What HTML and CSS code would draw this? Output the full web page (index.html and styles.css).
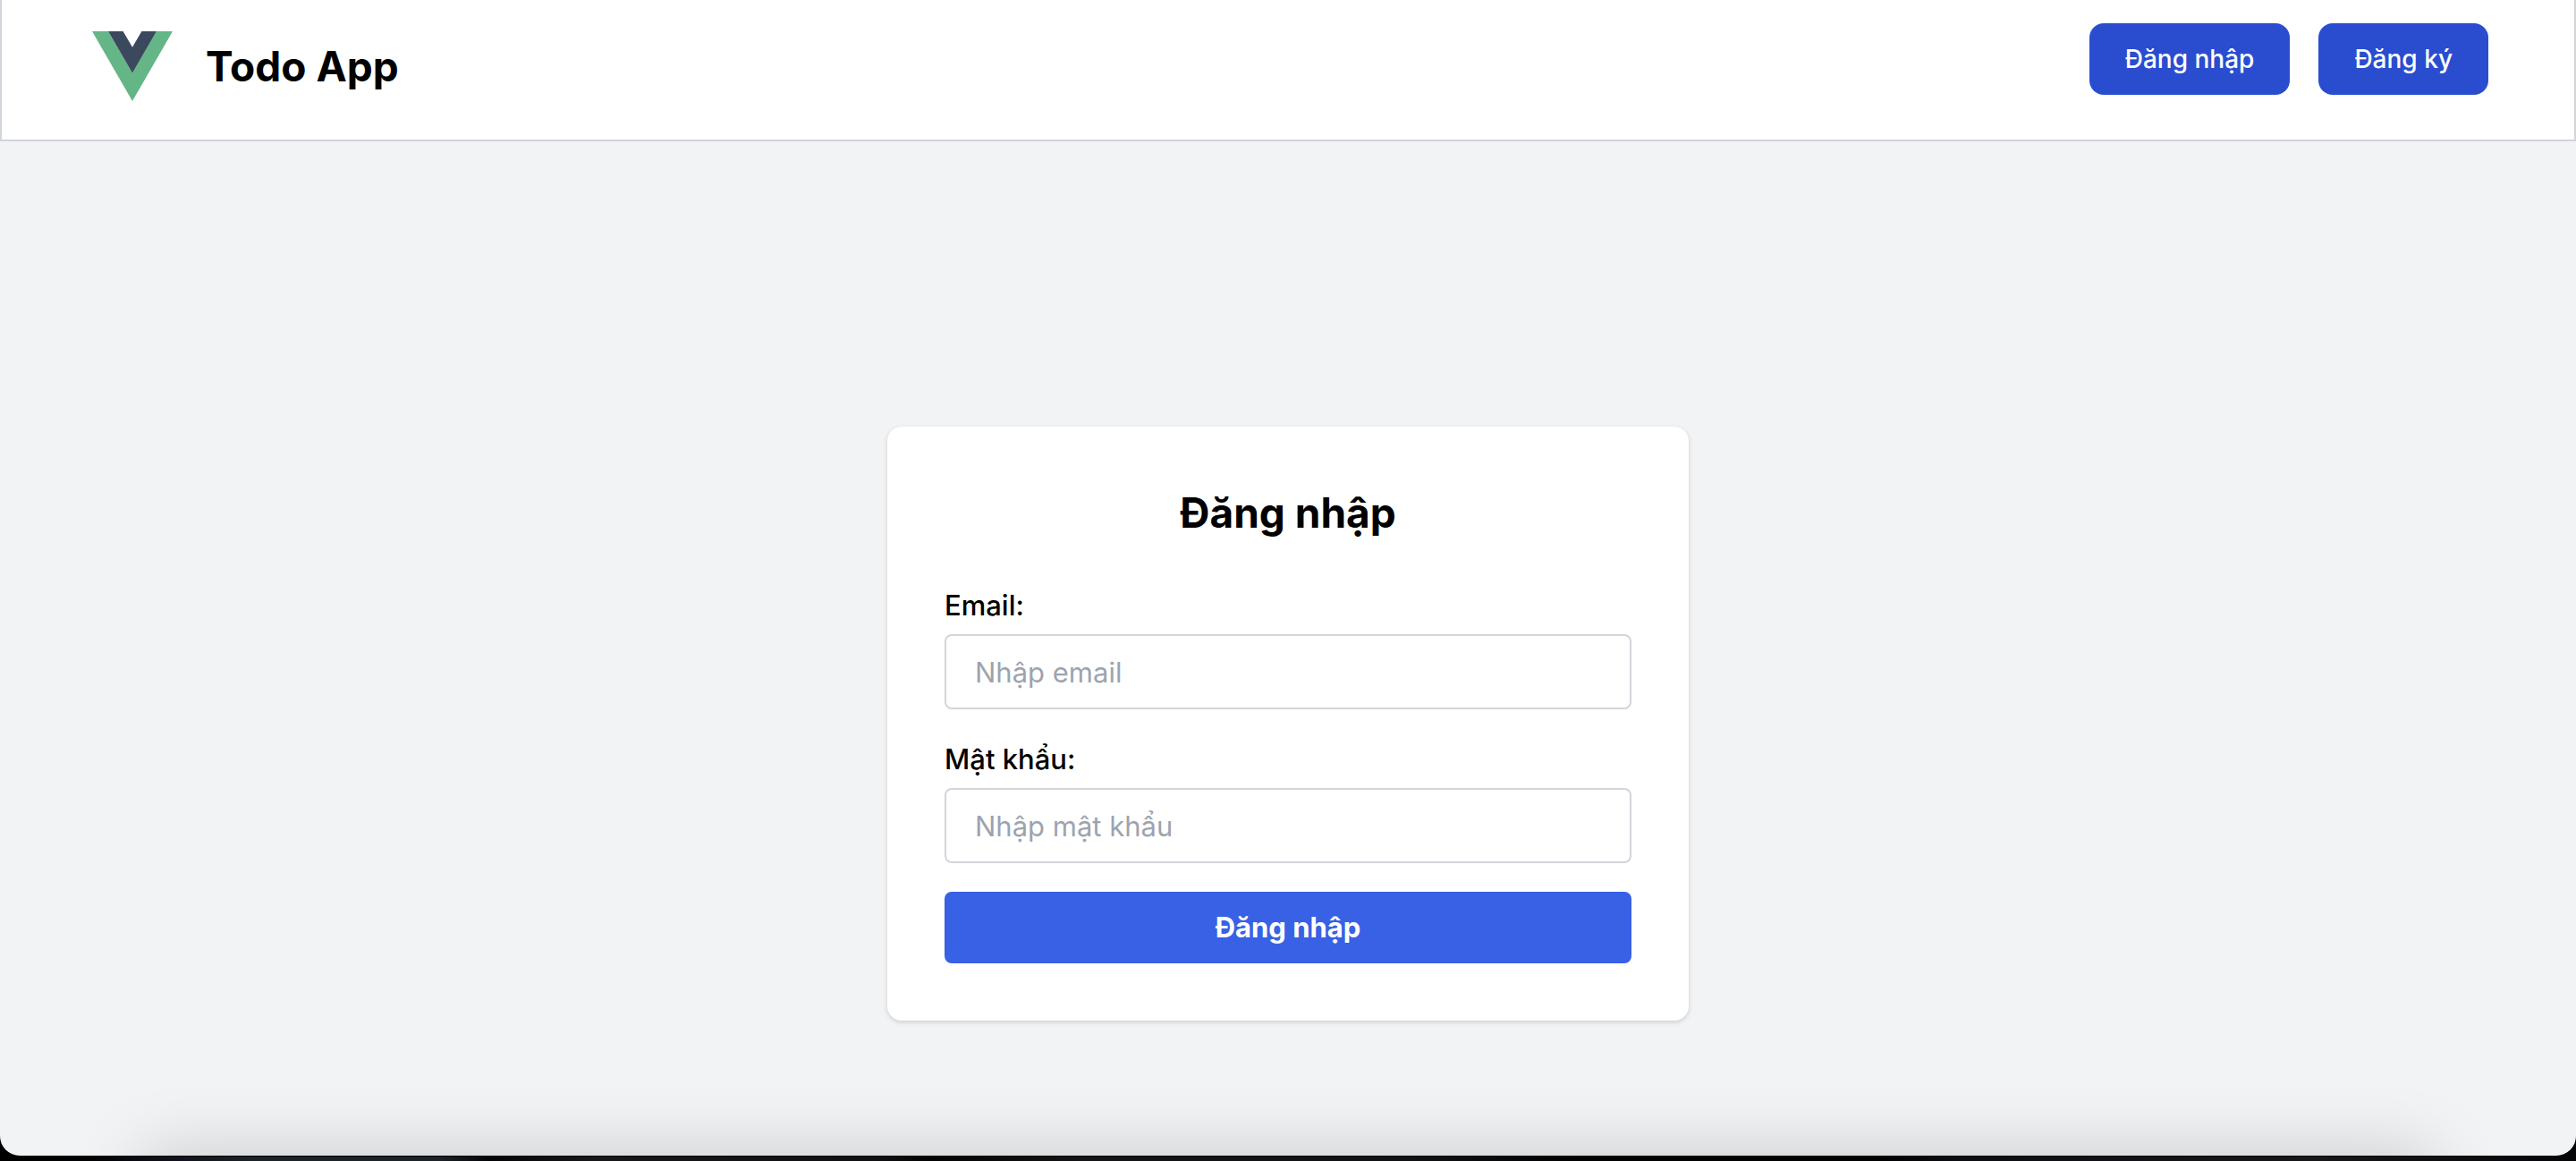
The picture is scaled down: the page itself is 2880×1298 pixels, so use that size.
FILE: index.html
```html
<!DOCTYPE html>
<html lang="vi">
<head>
  <meta charset="utf-8">
  <meta name="viewport" content="width=device-width, initial-scale=1">
  <title>Todo App</title>
  <link rel="stylesheet" href="styles.css">
</head>
<body>
  <div class="window">
    <header class="header">
      <div class="brand">
        <svg class="brand-logo" viewBox="0 0 100 78" aria-hidden="true">
          <path fill="#64b687" d="M5 0H23L50 46.700L77 0H95L50 78Z"/>
          <path fill="#3b495e" d="M23 0H39.600L50 17.800L60.400 0H77L50 46.700Z"/>
        </svg>
        <h1 class="brand-title">Todo App</h1>
      </div>
      <nav class="nav">
        <button class="nav-button" type="button">Đăng nhập</button>
        <button class="nav-button" type="button">Đăng ký</button>
      </nav>
    </header>
    <main class="main">
      <form class="card">
        <h2 class="card-title">Đăng nhập</h2>
        <div class="field">
          <label class="label" for="email">Email:</label>
          <input class="input" id="email" type="email" placeholder="Nhập email">
        </div>
        <div class="field">
          <label class="label" for="password">Mật khẩu:</label>
          <input class="input" id="password" type="password" placeholder="Nhập mật khẩu">
        </div>
        <button class="submit" type="submit">Đăng nhập</button>
      </form>
    </main>
    <div class="dock-shadow"></div>
  </div>
</body>
</html>
```
FILE: styles.css
```css
* {
  box-sizing: border-box;
}

body {
  margin: 0;
  min-height: 100vh;
  display: flex;
  flex-direction: column;
  padding-bottom: 6px;
  background: linear-gradient(90deg, #000 0%, #030305 4%, #0c0e1a 6%, #1c2329 10%, #1c2329 17%, #040407 19%, #17171a 23%, #101013 34%, #030303 36%, #141416 42%, #0f1215 55%, #010101 61%, #010101 73%, #0c0c14 76%, #17171a 90%, #07070d 98%, #050508 100%);
  color: #000;
  font-family: Inter, "Noto Sans", sans-serif;
  font-size: 31px;
  line-height: 48px;
}

h1,
h2 {
  margin: 0;
}

button,
input {
  font: inherit;
}

.window {
  position: relative;
  flex: 1;
  display: flex;
  flex-direction: column;
  overflow: hidden;
  border-radius: 0 0 22px 22px;
  background: #f2f3f5;
  box-shadow: 0 1px 0 #000;
}

.header {
  display: flex;
  align-items: flex-start;
  justify-content: space-between;
  padding: 26px 96px 34px;
  border: 2px solid #d2d5db;
  border-top: 0;
  background: #fff;
}

.brand {
  display: flex;
  align-items: center;
  gap: 32px;
  height: 96px;
}

.brand-logo {
  width: 100px;
  height: 78px;
}

.brand-title,
.card-title {
  font-size: 46px;
  line-height: 64px;
  font-weight: 700;
}

.nav {
  display: flex;
  gap: 32px;
}

.nav-button {
  padding: 20px 40px;
  border: 0;
  border-radius: 16px;
  background: #2a4dd0;
  color: #fff;
  font-size: 28px;
  line-height: 40px;
  font-weight: 500;
}

.main {
  flex: 1;
  padding: 319px 32px 64px;
}

.card {
  display: flex;
  flex-direction: column;
  gap: 32px;
  max-width: 896px;
  margin: 0 auto;
  padding: 64px;
  border-radius: 16px;
  background: #fff;
  box-shadow: 0 2px 6px rgba(0, 0, 0, 0.1), 0 2px 4px rgba(0, 0, 0, 0.06);
}

.card-title {
  margin-bottom: 16px;
  text-align: center;
}

.field {
  display: flex;
  flex-direction: column;
  gap: 8px;
}

.label {
  font-weight: 500;
}

.input {
  width: 100%;
  height: 84px;
  padding: 16px 32px;
  border: 2px solid #d2d5db;
  border-radius: 8px;
  background: #fff;
  color: #000;
}

.input::placeholder {
  color: #9da3af;
  opacity: 1;
}

.submit {
  padding: 16px 32px;
  border: 0;
  border-radius: 8px;
  background: #3861e5;
  color: #fff;
  font-weight: 700;
}

/* Soft shade along the bottom edge of the window */
.dock-shadow {
  position: absolute;
  left: 160px;
  right: 160px;
  top: 100%;
  height: 80px;
  box-shadow: 0 0 80px rgba(0, 0, 0, 0.18);
}
```
